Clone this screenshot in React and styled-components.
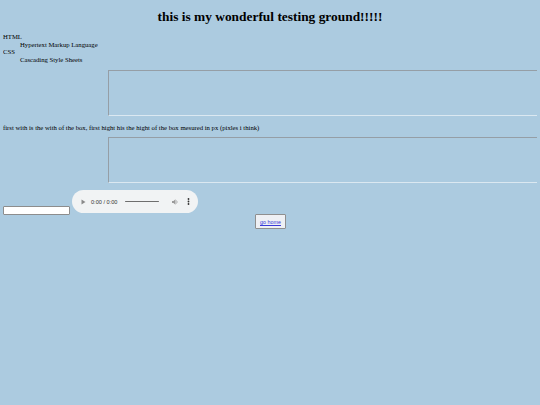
import React from 'react'
import styled, { createGlobalStyle } from 'styled-components'

const GlobalStyle = createGlobalStyle`
  html, body {
    background: #accbe0;
  }
  body {
    margin: 3px;
    font-family: "Liberation Serif", "Times New Roman", serif;
    font-size: 6.7px;
    color: #000;
  }
`

const Title = styled.h1`
  font-size: 13.4px;
  font-weight: bold;
  text-align: center;
  margin: 6px 0 8px;
`

const Terms = styled.dl`
  margin: 0 0 7px;
  line-height: 7.6px;
`

const Term = styled.dt``

const Meaning = styled.dd`
  margin-left: 17px;
`

const Box = styled.textarea`
  display: block;
  box-sizing: border-box;
  margin-left: 105px;
  width: 430px;
  height: 46px;
  padding: 1px;
  background: transparent;
  border: 1px solid;
  border-color: #959ea6 #dbe8f1 #dbe8f1 #959ea6;
  resize: none;
  outline: none;
`

const Note = styled.p`
  margin: 8px 0 6px;
`

const MediaRow = styled.div`
  display: flex;
  align-items: flex-start;
  gap: 2px;
  margin-top: 7px;
`

const TextInput = styled.input`
  box-sizing: border-box;
  width: 67px;
  height: 9px;
  margin-top: 16px;
  padding: 0;
  background: #fff;
  border: 1px solid #8d8d8d;
  border-radius: 1px;
`

const Player = styled.div`
  display: flex;
  align-items: center;
  width: 126px;
  height: 23px;
  box-sizing: border-box;
  padding: 0 8px 0 9px;
  background: #f1f3f4;
  border-radius: 12px;
  font-family: "Liberation Sans", Arial, sans-serif;
  font-size: 5.6px;
  color: #333;
`

const Time = styled.span`
  margin-left: 5px;
  white-space: nowrap;
`

const Track = styled.div`
  width: 34px;
  height: 1px;
  margin-left: 8px;
  background: #6e6e6e;
  border-radius: 1px;
`

const Spacer = styled.div`
  flex: 1;
`

const Center = styled.div`
  display: flex;
  justify-content: center;
  margin-top: -1px;
`

const HomeButton = styled.button`
  display: flex;
  align-items: center;
  height: 15px;
  padding: 0 4px;
  background: #eef0f4;
  border: 1px solid #8f8f8f;
  border-radius: 1px;
  font-family: "Liberation Sans", Arial, sans-serif;
  font-size: 5.4px;
  margin-left: 1px;
`

const HomeLink = styled.a`
  color: #3a3ad8;
  text-decoration: underline;
`

function PlayIcon() {
  return (
    <svg width="5" height="6" viewBox="0 0 5 6">
      <path d="M0.5 0.5 L4.5 3 L0.5 5.5 Z" fill="#8a8a8a" />
    </svg>
  )
}

function VolumeIcon() {
  return (
    <svg width="7" height="6" viewBox="0 0 7 6">
      <path d="M0 2 H1.5 L3.5 0.3 V5.7 L1.5 4 H0 Z" fill="#9a9a9a" />
      <path d="M4.5 1.5 Q5.8 3 4.5 4.5" stroke="#9a9a9a" strokeWidth="0.8" fill="none" />
    </svg>
  )
}

function MoreIcon() {
  return (
    <svg width="3" height="7" viewBox="0 0 3 7" style={{ marginLeft: 8 }}>
      <circle cx="1.5" cy="1" r="0.9" fill="#333" />
      <circle cx="1.5" cy="3.5" r="0.9" fill="#333" />
      <circle cx="1.5" cy="6" r="0.9" fill="#333" />
    </svg>
  )
}

export default function App() {
  return (
    <>
      <GlobalStyle />
      <Title>this is my wonderful testing ground!!!!!</Title>
      <Terms>
        <Term>HTML</Term>
        <Meaning>Hypertext Markup Language</Meaning>
        <Term>CSS</Term>
        <Meaning>Cascading Style Sheets</Meaning>
      </Terms>
      <Box />
      <Note>first with is the with of the box, first hight his the hight of the box mesured in px (pixles i think)</Note>
      <Box />
      <MediaRow>
        <TextInput type="text" />
        <Player>
          <PlayIcon />
          <Time>0:00 / 0:00</Time>
          <Track />
          <Spacer />
          <VolumeIcon />
          <MoreIcon />
        </Player>
      </MediaRow>
      <Center>
        <HomeButton>
          <HomeLink href="#">go home</HomeLink>
        </HomeButton>
      </Center>
    </>
  )
}
